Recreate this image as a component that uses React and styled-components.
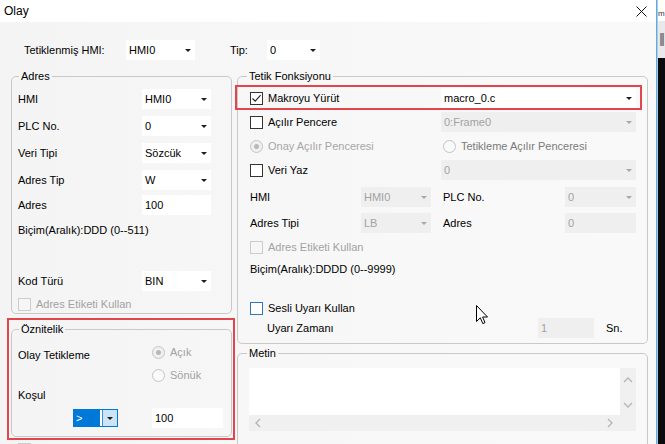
import React from "react";
import styled, { createGlobalStyle } from "styled-components";

const GlobalStyle = createGlobalStyle`
  html, body {
    margin: 0;
    padding: 0;
    background: #000;
  }
  body {
    font-family: "Liberation Sans", Arial, sans-serif;
    font-size: 11px;
    color: #000;
  }
  * {
    box-sizing: border-box;
  }
`;

const Screen = styled.div`
  position: relative;
  display: flex;
  width: 665px;
  height: 444px;
  overflow: hidden;
`;

const Dialog = styled.div`
  width: 657px;
  flex-shrink: 0;
  display: flex;
  flex-direction: column;
  border-right: 1px solid #6aa7dc;
  background: linear-gradient(90deg, #f4f4f4 0%, #f8f8f8 60%, #f9f9f9 100%);
`;

const TitleBar = styled.div`
  height: 22px;
  flex-shrink: 0;
  display: flex;
  align-items: center;
  justify-content: space-between;
  padding: 0 9px 0 4px;
  background: #fff;
`;

const Title = styled.span`
  font-size: 12px;
`;

const Body = styled.div`
  flex: 1;
  padding: 18px 0 0 11px;
`;

const TopRow = styled.div`
  display: flex;
  align-items: center;
  height: 20px;
  padding-left: 13px;
`;

const Columns = styled.div`
  display: flex;
  gap: 5px;
  margin-top: 10px;
  align-items: flex-start;
`;

const Column = styled.div`
  display: flex;
  flex-direction: column;
  width: ${(p) => p.$w}px;
  flex-shrink: 0;
`;

const Group = styled.fieldset`
  margin: ${(p) => p.$mt || 0}px 0 0 0;
  padding: 0 0 0 ${(p) => p.$pl}px;
  border: 1px solid #c9c9c9;
  border-radius: 5px;
  min-width: 0;
  height: ${(p) => p.$h}px;
`;

const Legend = styled.legend`
  padding: 0 2px;
  margin-left: ${(p) => p.$ml}px;
  line-height: 12px;
  font-size: 11px;
`;

const Row = styled.div`
  display: flex;
  align-items: ${(p) => (p.$top ? "flex-start" : "center")};
  height: ${(p) => p.$h || 20}px;
  margin-top: ${(p) => p.$mt || 0}px;
  padding-left: ${(p) => p.$indent || 0}px;
`;

const Label = styled.span`
  width: ${(p) => (p.$w ? `${p.$w}px` : "auto")};
  flex-shrink: 0;
  white-space: nowrap;
  line-height: 14px;
  padding-top: ${(p) => p.$pt || 0}px;
  color: ${(p) => (p.$muted ? "#a2a2a2" : "#000")};
`;

const Spacer = styled.span`
  width: ${(p) => p.$w}px;
  flex-shrink: 0;
`;

const ComboBox = styled.div`
  display: flex;
  align-items: center;
  justify-content: space-between;
  width: ${(p) => p.$w}px;
  height: 20px;
  flex-shrink: 0;
  padding: 0 4px 0 3px;
  background: ${(p) => (p.$disabled ? "#efefef" : "#fff")};
  color: ${(p) => (p.$disabled ? "#a2a2a2" : "#000")};
  white-space: nowrap;
`;

const Arrow = styled.span`
  width: 0;
  height: 0;
  border-left: 3px solid transparent;
  border-right: 3px solid transparent;
  border-top: 3px solid ${(p) => (p.$disabled ? "#a8a8a8" : "#1e1e1e")};
`;

const InputBox = styled.div`
  display: flex;
  align-items: center;
  width: ${(p) => p.$w}px;
  height: 20px;
  flex-shrink: 0;
  padding-left: 3px;
  background: ${(p) => (p.$disabled ? "#efefef" : "#fff")};
  color: ${(p) => (p.$disabled ? "#a2a2a2" : "#000")};
`;

const Item = styled.label`
  display: flex;
  align-items: center;
  gap: 5px;
  width: ${(p) => (p.$w ? `${p.$w}px` : "auto")};
  flex-shrink: 0;
  margin-left: ${(p) => p.$ml || 0}px;
  white-space: nowrap;
  line-height: 14px;
  color: ${(p) => p.$color || "#000"};
`;

const Box = styled.span`
  position: relative;
  width: 13px;
  height: 13px;
  flex-shrink: 0;
  border: 1px solid ${(p) => p.$border};
  background: ${(p) => p.$bg};
  display: flex;
  align-items: center;
  justify-content: center;
`;

const Round = styled(Box)`
  border-radius: 50%;
`;

const Dot = styled.span`
  width: 5px;
  height: 5px;
  border-radius: 50%;
  background: #b8b8b8;
`;

const SelectCombo = styled.div`
  display: flex;
  align-items: stretch;
  width: 45px;
  height: 18px;
  flex-shrink: 0;
  margin-left: 55px;
  margin-right: 34px;
  border: 1px solid #0078d7;
  background: #fff;
`;

const Selected = styled.span`
  width: 26px;
  background: #0078d7;
  color: #fff;
  line-height: 16px;
  padding-left: 2px;
`;

const DropButton = styled.span`
  margin-left: auto;
  width: 15px;
  display: flex;
  align-items: center;
  justify-content: center;
  background: #cce4f7;
  border-left: 1px solid #3d8fd6;
`;

const TextArea = styled.div`
  display: grid;
  grid-template-columns: 1fr 16px;
  grid-template-rows: 47px 16px;
  width: 387px;
  margin-top: 9px;
`;

const TextField = styled.div`
  background: #fff;
`;

const ScrollBar = styled.div`
  display: flex;
  flex-direction: ${(p) => (p.$vertical ? "column" : "row")};
  align-items: center;
  justify-content: space-between;
  padding: ${(p) => (p.$vertical ? "8px 0 6px" : "0 22px 0 5px")};
  background: #f0f0f0;
  grid-column: ${(p) => (p.$vertical ? "auto" : "1 / span 2")};
`;

const Backdrop = styled.div`
  flex: 1;
  display: flex;
  flex-direction: column;
  overflow: hidden;
  background: #0b0b0b;
  border-left: 1px solid #9fd0ee;
`;

const BackdropTop = styled.div`
  height: 21px;
  background: #fff;
  padding: 9px 0 0 0;
  font-size: 8px;
  line-height: 9px;
  color: #333;
`;

const BackdropMid = styled.div`
  height: 37px;
  background: #e9e9e9;
  padding: 9px 0 0 1px;
  font-size: 18px;
  line-height: 20px;
  color: #777;
  letter-spacing: -2px;
`;

const Annotation = styled.div`
  position: absolute;
  left: ${(p) => p.$x}px;
  top: ${(p) => p.$y}px;
  width: ${(p) => p.$w}px;
  height: ${(p) => p.$h}px;
  border: 2px solid #e3454c;
  pointer-events: none;
`;

const Cursor = styled.svg`
  position: absolute;
  left: 476px;
  top: 305px;
`;

const Combo = ({ w, value, disabled }) => (
  <ComboBox $w={w} $disabled={disabled}>
    <span>{value}</span>
    <Arrow $disabled={disabled} />
  </ComboBox>
);

const Check = ({ children, checked, disabled, hover, w, ml }) => (
  <Item $w={w} $ml={ml} $color={disabled ? "#a2a2a2" : "#000"}>
    <Box
      $border={disabled ? "#cccccc" : hover ? "#2f79b9" : "#333"}
      $bg={disabled ? "#f6f6f6" : "#fff"}>
      {checked && (
        <svg width="11" height="11" viewBox="0 0 11 11">
          <path d="M1.5 5.5 L4.2 8.2 L9.6 2.2" fill="none" stroke="#222" strokeWidth="1.1" />
        </svg>
      )}
    </Box>
    {children}
  </Item>
);

const Radio = ({ children, checked, color, w, ml }) => (
  <Item $w={w} $ml={ml} $color={color}>
    <Round $border="#c4c4c4" $bg={checked ? "#f0f0f0" : "#fafafa"}>
      {checked && <Dot />}
    </Round>
    {children}
  </Item>
);

const Chevron = ({ dir }) => {
  const paths = {
    up: "M1 6 L5 2 L9 6",
    down: "M1 2 L5 6 L9 2",
    left: "M6 1 L2 5 L6 9",
    right: "M2 1 L6 5 L2 9",
  };
  const vertical = dir === "up" || dir === "down";
  return (
    <svg width={vertical ? 10 : 8} height={vertical ? 8 : 10} viewBox={vertical ? "0 0 10 8" : "0 0 8 10"}>
      <path d={paths[dir]} fill="none" stroke="#b4b4b4" strokeWidth="1.3" />
    </svg>
  );
};

const AdresGroup = () => (
  <Group $pl={6} $h={244}>
    <Legend $ml={1}>Adres</Legend>
    <Row $mt={7}>
      <Label $w={124}>HMI</Label>
      <Combo w={69} value="HMI0" />
    </Row>
    <Row $mt={7}>
      <Label $w={124}>PLC No.</Label>
      <Combo w={69} value="0" />
    </Row>
    <Row $mt={7}>
      <Label $w={124}>Veri Tipi</Label>
      <Combo w={69} value="Sözcük" />
    </Row>
    <Row $mt={7}>
      <Label $w={124}>Adres Tip</Label>
      <Combo w={69} value="W" />
    </Row>
    <Row $mt={5}>
      <Label $w={124}>Adres</Label>
      <InputBox $w={69}>100</InputBox>
    </Row>
    <Row $h={14} $mt={8} $indent={-2}>
      <Label>Biçim(Aralık):DDD (0--511)</Label>
    </Row>
    <Row $mt={34}>
      <Label $w={124}>Kod Türü</Label>
      <Combo w={69} value="BIN" />
    </Row>
    <Row $h={14} $mt={6} $indent={-1}>
      <Check disabled>Adres Etiketi Kullan</Check>
    </Row>
  </Group>
);

const OznitelikGroup = () => (
  <Group $pl={6} $h={114} $mt={9}>
    <Legend $ml={1}>Öznitelik</Legend>
    <Row $h={14} $mt={10} $top>
      <Label $w={134} $pt={3}>Olay Tetikleme</Label>
      <Radio checked color="#a2a2a2">Açık</Radio>
    </Row>
    <Row $h={14} $mt={9}>
      <Radio ml={134} color="#a2a2a2">Sönük</Radio>
    </Row>
    <Row $h={14} $mt={6}>
      <Label>Koşul</Label>
    </Row>
    <Row $mt={6}>
      <SelectCombo>
        <Selected>&gt;</Selected>
        <DropButton>
          <Arrow />
        </DropButton>
      </SelectCombo>
      <InputBox $w={71}>100</InputBox>
    </Row>
  </Group>
);

const TetikGroup = () => (
  <Group $pl={12} $h={274}>
    <Legend $ml={-3}>Tetik Fonksiyonu</Legend>
    <Row $mt={6}>
      <Check checked w={191}>Makroyu Yürüt</Check>
      <Combo w={195} value="macro_0.c" />
    </Row>
    <Row $mt={4}>
      <Check w={191}>Açılır Pencere</Check>
      <Combo w={195} value="0:Frame0" disabled />
    </Row>
    <Row $mt={4}>
      <Radio checked w={193} color="#a6a6a6">Onay Açılır Penceresi</Radio>
      <Radio color="#7a7a7a">Tetikleme Açılır Penceresi</Radio>
    </Row>
    <Row $mt={4}>
      <Check w={191}>Veri Yaz</Check>
      <Combo w={195} value="0" disabled />
    </Row>
    <Row $mt={7}>
      <Label $w={111}>HMI</Label>
      <Combo w={70} value="HMI0" disabled />
      <Spacer $w={12} />
      <Label $w={122}>PLC No.</Label>
      <Combo w={71} value="0" disabled />
    </Row>
    <Row $mt={6}>
      <Label $w={111}>Adres Tipi</Label>
      <Combo w={70} value="LB" disabled />
      <Spacer $w={12} />
      <Label $w={122}>Adres</Label>
      <InputBox $w={71} $disabled>0</InputBox>
    </Row>
    <Row $mt={4}>
      <Check disabled>Adres Etiketi Kullan</Check>
    </Row>
    <Row $mt={2}>
      <Label>Biçim(Aralık):DDDD (0--9999)</Label>
    </Row>
    <Row $mt={19}>
      <Check hover>Sesli Uyarı Kullan</Check>
    </Row>
    <Row $indent={17}>
      <Label $w={271}>Uyarı Zamanı</Label>
      <InputBox $w={56} $disabled>1</InputBox>
      <Spacer $w={12} />
      <Label>Sn.</Label>
    </Row>
  </Group>
);

const MetinGroup = () => (
  <Group $pl={11} $h={120} $mt={3}>
    <Legend $ml={-2}>Metin</Legend>
    <TextArea>
      <TextField />
      <ScrollBar $vertical>
        <Chevron dir="up" />
        <Chevron dir="down" />
      </ScrollBar>
      <ScrollBar>
        <Chevron dir="left" />
        <Chevron dir="right" />
      </ScrollBar>
    </TextArea>
    <Row $h={14} $mt={12}>
      <Check disabled />
    </Row>
  </Group>
);

export default function App() {
  return (
    <>
      <GlobalStyle />
      <Screen>
        <Dialog>
          <TitleBar>
            <Title>Olay</Title>
            <svg width="11" height="11" viewBox="0 0 11 11">
              <path d="M0.5 0.5 L10.5 10.5 M10.5 0.5 L0.5 10.5" stroke="#111" strokeWidth="1" />
            </svg>
          </TitleBar>
          <Body>
            <TopRow>
              <Label $w={102}>Tetiklenmiş HMI:</Label>
              <Combo w={69} value="HMI0" />
              <Spacer $w={35} />
              <Label $w={37}>Tip:</Label>
              <Combo w={53} value="0" />
            </TopRow>
            <Columns>
              <Column $w={221}>
                <AdresGroup />
                <OznitelikGroup />
                <Row $h={14} $mt={5} $indent={7}>
                  <Check disabled />
                </Row>
              </Column>
              <Column $w={411}>
                <TetikGroup />
                <MetinGroup />
              </Column>
            </Columns>
          </Body>
        </Dialog>
        <Backdrop>
          <BackdropTop>m</BackdropTop>
          <BackdropMid>ll</BackdropMid>
        </Backdrop>
        <Annotation $x={7} $y={318} $w={228} $h={122} />
        <Annotation $x={235} $y={85} $w={407} $h={25} />
        <Cursor width="13" height="20" viewBox="0 0 13 20">
          <path
            d="M0.5 0.5 L0.5 16.5 L4.3 12.8 L6.8 18.6 L9 17.6 L6.6 12 L11.5 12 Z"
            fill="#fff"
            stroke="#000"
            strokeWidth="1"
          />
        </Cursor>
      </Screen>
    </>
  );
}
